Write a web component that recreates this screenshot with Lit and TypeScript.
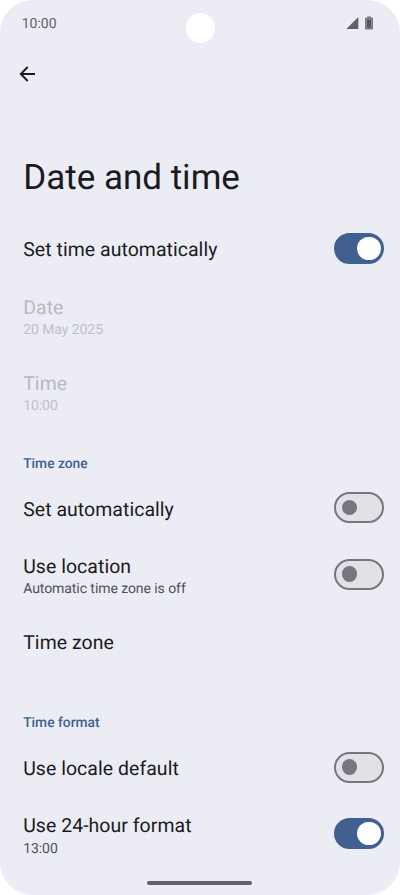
import { LitElement, html, css, nothing } from "lit";
import { customElement, property } from "lit/decorators.js";
import { classMap } from "lit/directives/class-map.js";

@customElement("toggle-switch")
class ToggleSwitch extends LitElement {
  @property({ type: Boolean }) on = false;

  static styles = css`
    :host { display: block; flex: none; }
    .track {
      box-sizing: border-box;
      display: flex;
      align-items: center;
      width: 50.6px;
      height: 31px;
      border: 2px solid #777680;
      border-radius: 16px;
      background: #e2e2e6;
      padding: 0 5.8px;
    }
    .thumb { width: 15.5px; height: 15.5px; border-radius: 50%; background: #777680; }
    .on { background: #415f91; border-color: #415f91; justify-content: flex-end; padding: 0 1.8px; }
    .on .thumb { width: 23.6px; height: 23.6px; background: #fff; }
  `;

  render() {
    return html`<div class=${classMap({ track: true, on: this.on })}><div class="thumb"></div></div>`;
  }
}

@customElement("setting-row")
class SettingRow extends LitElement {
  @property() label = "";
  @property() summary = "";
  @property() control = "";
  @property({ type: Boolean }) disabled = false;

  static styles = css`
    :host { display: block; }
    .row {
      box-sizing: border-box;
      display: flex;
      align-items: center;
      justify-content: space-between;
      height: 57px;
      padding: 0 15.7px 0 23.2px;
    }
    .tall { height: 76px; }
    .text { padding-top: 3.8px; }
    .tall .text { padding-top: 5.5px; }
    .label { font-size: 19.46px; line-height: 24px; color: #1a1b20; letter-spacing: 0.06px; }
    .summary {
      font-size: 14px;
      line-height: 19px;
      color: #505157;
      margin-top: 1.3px;
      letter-spacing: -0.07px;
    }
    .disabled .label { color: #b9b9be; }
    .disabled .summary { color: #c1c1c7; }
  `;

  render() {
    return html`
      <div class=${classMap({ row: true, tall: !!this.summary, disabled: this.disabled })}>
        <div class="text">
          <div class="label">${this.label}</div>
          ${this.summary ? html`<div class="summary">${this.summary}</div>` : nothing}
        </div>
        ${this.control ? html`<toggle-switch ?on=${this.control === "on"}></toggle-switch>` : nothing}
      </div>
    `;
  }
}

@customElement("app-root")
class AppRoot extends LitElement {
  static styles = css`
    :host {
      display: block;
      background: #fff;
      font-family: Roboto, sans-serif;
      text-rendering: geometricPrecision;
    }
    .screen {
      position: relative;
      box-sizing: border-box;
      height: 895px;
      overflow: hidden;
      display: flex;
      flex-direction: column;
      background: #ebecf4;
      border-radius: 33px;
    }
    .status {
      display: flex;
      align-items: center;
      justify-content: space-between;
      height: 46px;
      padding: 0 27px 0 21.7px;
      flex: none;
    }
    .clock { font-size: 14px; line-height: 16px; color: #626268; padding-top: 2px; }
    .icons { display: flex; gap: 6.5px; }
    .icons svg, .back svg { display: block; }
    .camera {
      position: absolute;
      top: 13px;
      left: 185.5px;
      width: 29.5px;
      height: 29.5px;
      border-radius: 50%;
      background: #fff;
    }
    .back { height: 56px; display: flex; align-items: center; padding-left: 19px; flex: none; }
    h1 {
      margin: 55px 0 21px;
      padding-left: 23.2px;
      font-size: 35px;
      line-height: 42px;
      font-weight: 400;
      color: #1a1b20;
    }
    h2 {
      margin: 0;
      padding: 24.6px 0 0 23.2px;
      height: 50.2px;
      box-sizing: border-box;
      font-size: 13.8px;
      line-height: 20px;
      font-weight: 500;
      color: #415f91;
    }
    .format { margin-top: 19.3px; }
    .home {
      position: absolute;
      left: 147px;
      bottom: 10px;
      width: 105px;
      height: 4px;
      border-radius: 2px;
      background: #616166;
    }
  `;

  render() {
    return html`
      <div class="screen">
        <div class="status">
          <span class="clock">10:00</span>
          <div class="icons">
            <svg width="13" height="14" viewBox="0 0 13 14"><path d="M0.3 13 12.3 1v12z" fill="#606066" /></svg>
            <svg width="8" height="14" viewBox="0 0 8 14">
              <path d="M2 0.4h4v1.4h1.2q.8 0 .8.8v10.2q0 .8-.8.8H.8q-.8 0-.8-.8V2.6q0-.8.8-.8H2z" fill="#77777c" />
              <path d="M1.5 3.3h5v8.9h-5z" fill="#56565c" stroke="#a2a2a8" stroke-width=".6" />
            </svg>
          </div>
        </div>
        <div class="camera"></div>
        <div class="back">
          <svg width="17" height="16" viewBox="0 0 17 16" fill="none" stroke="#1a1b20" stroke-width="1.9">
            <path d="M16 8H2M8.7 1 1.8 8l6.9 7" />
          </svg>
        </div>
        <h1>Date and time</h1>
        <setting-row label="Set time automatically" control="on"></setting-row>
        <setting-row label="Date" summary="20 May 2025" disabled></setting-row>
        <setting-row label="Time" summary="10:00" disabled></setting-row>
        <h2>Time zone</h2>
        <setting-row label="Set automatically" control="off"></setting-row>
        <setting-row label="Use location" summary="Automatic time zone is off" control="off"></setting-row>
        <setting-row label="Time zone"></setting-row>
        <h2 class="format">Time format</h2>
        <setting-row label="Use locale default" control="off"></setting-row>
        <setting-row label="Use 24-hour format" summary="13:00" control="on"></setting-row>
        <div class="home"></div>
      </div>
    `;
  }
}
